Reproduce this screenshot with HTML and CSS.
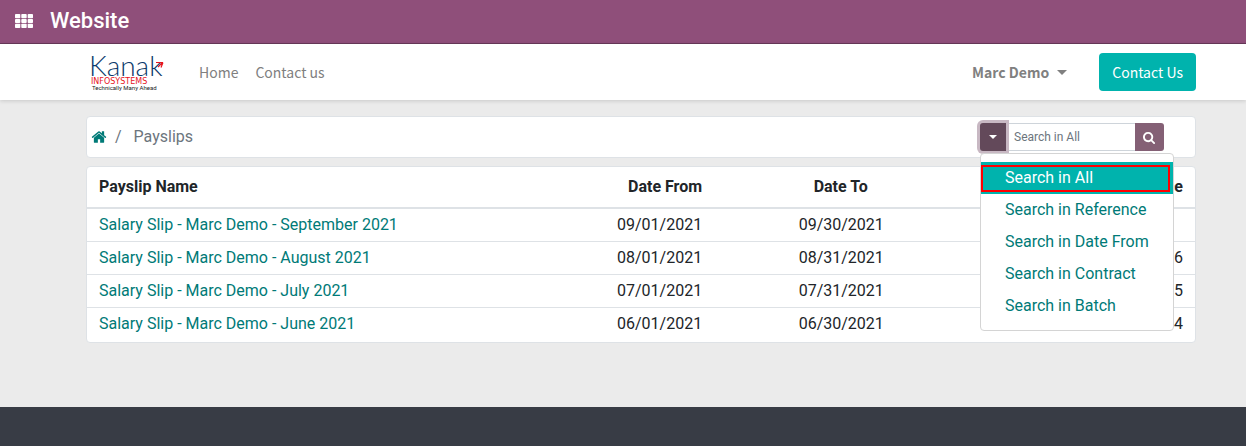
FILE: index.html
```html
<!DOCTYPE html>
<html lang="en">
<head>
<meta charset="utf-8">
<title>Payslips</title>
<link rel="stylesheet" href="styles.css">
</head>
<body>
<div class="topbar">
  <button class="apps" type="button" aria-label="Applications">
    <svg width="18" height="14" viewBox="0 0 18 14" fill="currentColor"><rect x="0" y="0" width="5.300" height="4.200" rx=".8"/><rect x="6.300" y="0" width="5.400" height="4.200" rx=".8"/><rect x="12.700" y="0" width="5.300" height="4.200" rx=".8"/><rect x="0" y="4.900" width="5.300" height="4.200" rx=".8"/><rect x="6.300" y="4.900" width="5.400" height="4.200" rx=".8"/><rect x="12.700" y="4.900" width="5.300" height="4.200" rx=".8"/><rect x="0" y="9.800" width="5.300" height="4.200" rx=".8"/><rect x="6.300" y="9.800" width="5.400" height="4.200" rx=".8"/><rect x="12.700" y="9.800" width="5.300" height="4.200" rx=".8"/></svg>
  </button>
  <a class="brand" href="#">Website</a>
</div>
<header class="header">
  <a class="logo" href="#" aria-label="Kanak Infosystems">
    <svg width="80" height="44" viewBox="0 0 80 44">
      <text class="logo-name" x="0" y="26">Kanak</text>
      <path d="M67 12.500h7M74 12.500l-2 5M73 13l-4 4" fill="none" stroke="#e8141c" stroke-width="1.200"/>
      <text class="logo-sub" x="2" y="34">INFOSYSTEMS</text>
      <text class="logo-tag" x="3" y="40">Technically Many Ahead</text>
    </svg>
  </a>
  <nav class="nav">
    <a href="#">Home</a>
    <a href="#">Contact us</a>
  </nav>
  <button class="user" type="button">Marc Demo <span class="caret caret-user"></span></button>
  <a class="cta" href="#">Contact Us</a>
</header>
<main class="main">
  <div class="card toolbar">
    <nav class="crumbs" aria-label="Breadcrumb">
      <a href="#" aria-label="Home"><svg width="16" height="16" viewBox="0 0 1792 1792" fill="currentColor"><path d="M1472 992v480q0 26-19 45t-45 19h-384v-384h-256v384h-384q-26 0-45-19t-19-45v-480q0-1 .5-3t.5-3l575-474 575 474q1 2 1 6zm223-69l-62 74q-8 9-21 11h-3q-13 0-21-7l-692-577-692 577q-12 8-24 7-13-2-21-11l-62-74q-8-10-7-23.5t11-21.5l719-599q32-26 76-26t76 26l244 204v-195q0-14 9-23t23-9h192q14 0 23 9t9 23v408l219 182q10 8 11 21.5t-7 23.5z"/></svg></a>
      <span>/</span>
      <span class="current">Payslips</span>
    </nav>
    <form class="search">
      <button class="toggle" type="button" aria-label="Search options" aria-expanded="true"><span class="caret"></span></button>
      <input class="field" type="text" placeholder="Search in All" aria-label="Search">
      <button class="go" type="button" aria-label="Search"><svg width="13" height="13" viewBox="0 0 1792 1792" fill="currentColor"><path d="M1152 832q0-185-131.5-316.5t-316.5-131.5-316.5 131.5-131.5 316.5 131.5 316.5 316.5 131.5 316.5-131.5 131.5-316.5zm512 832q0 52-38 90t-90 38q-54 0-90-38l-343-342q-179 124-399 124-143 0-273.5-55.5t-225-150-150-225-55.5-273.5 55.5-273.5 150-225 225-150 273.5-55.5 273.5 55.5 225 150 150 225 55.5 273.5q0 220-124 399l343 343q37 37 37 90z"/></svg></button>
      <div class="menu">
        <a class="active" href="#">Search in All</a>
        <a href="#">Search in Reference</a>
        <a href="#">Search in Date From</a>
        <a href="#">Search in Contract</a>
        <a href="#">Search in Batch</a>
      </div>
    </form>
  </div>
  <div class="card">
    <table class="slips">
      <colgroup><col class="c-name"><col class="c-from"><col class="c-to"><col></colgroup>
      <thead>
        <tr><th>Payslip Name</th><th>Date From</th><th class="h-to">Date To</th><th>Reference</th></tr>
      </thead>
      <tbody>
        <tr><td><a href="#">Salary Slip - Marc Demo - September 2021</a></td><td>09/01/2021</td><td>09/30/2021</td><td></td></tr>
        <tr><td><a href="#">Salary Slip - Marc Demo - August 2021</a></td><td>08/01/2021</td><td>08/31/2021</td><td>006</td></tr>
        <tr><td><a href="#">Salary Slip - Marc Demo - July 2021</a></td><td>07/01/2021</td><td>07/31/2021</td><td>005</td></tr>
        <tr><td><a href="#">Salary Slip - Marc Demo - June 2021</a></td><td>06/01/2021</td><td>06/30/2021</td><td>004</td></tr>
      </tbody>
    </table>
  </div>
</main>
<footer class="footer"></footer>
</body>
</html>
```
FILE: styles.css
```css
* { box-sizing: border-box; }
body {
  margin: 0;
  min-height: 100vh;
  display: flex;
  flex-direction: column;
  background: #ebebeb;
  color: #212529;
  font: 16px/24px Roboto, sans-serif;
}
a { color: #007a77; text-decoration: none; }
button { border: 0; margin: 0; padding: 0; font: inherit; cursor: pointer; }
svg { display: block; }

.topbar {
  display: flex;
  align-items: center;
  gap: 17px;
  padding: 0 15px 2px;
  height: 44px;
  background: #8f4f7a;
  border-bottom: 1px solid #68395a;
}
.apps { background: none; color: #fff; }
.brand { color: #fff; font-size: 22px; font-weight: 500; }

.header {
  display: flex;
  align-items: center;
  height: 56px;
  padding: 0 50px 0 86px;
  background: #fff;
  box-shadow: 0 1px 4px rgba(0, 0, 0, .15);
  font-family: "Noto Sans CJK SC", sans-serif;
  font-size: 14px;
}
.logo { margin-left: 3px; }
.logo svg { overflow: visible; }
.logo-name { font: 300 28px Lato, sans-serif; fill: #0b3a6b; }
.logo-sub { font: 8px "DejaVu Sans", sans-serif; fill: #e8141c; }
.logo-tag { font: 6px Roboto, sans-serif; fill: #222; }
.nav { display: flex; flex: 1; gap: 17px; margin-left: 30px; }
.nav a { color: #808080; }
.user {
  display: flex;
  align-items: center;
  gap: 8px;
  margin-right: 32px;
  background: none;
  color: #808080;
  font-weight: bold;
}
.caret {
  display: block;
  border: 4px solid transparent;
  border-top-color: currentColor;
  border-bottom: 0;
}
.caret-user { border-width: 5px 5px 0; }
.cta {
  padding: 7px 13px;
  border-radius: 4px;
  background: #00b3ad;
  color: #fff;
}

.main { flex: 1; padding: 16px 50px 64px 86px; }
.card {
  background: #fff;
  border: 1px solid #dee2e6;
  border-radius: 4px;
}
.toolbar {
  display: flex;
  align-items: center;
  justify-content: space-between;
  margin-bottom: 8px;
  padding: 6px 31px 6px 4px;
}
.crumbs { display: flex; align-items: center; gap: 8px; color: #6c757d; }
.current { margin-left: 4px; }
.search { position: relative; display: flex; width: 184px; height: 28px; }
.toggle, .go { display: flex; align-items: center; justify-content: center; color: #fff; }
.toggle {
  width: 26px;
  border-radius: 3px 0 0 3px;
  background: #63495a;
  box-shadow: 0 0 0 3px #c8b8c3;
  z-index: 1;
}
.field {
  flex: 1;
  min-width: 0;
  padding: 4px 8px;
  border: 1px solid #ced4da;
  border-width: 1px 0;
  font: 12px/18px Roboto, sans-serif;
}
.field::placeholder { color: #6c757d; opacity: 1; }
.go { width: 29px; border-radius: 0 3px 3px 0; background: #846075; }
.menu {
  position: absolute;
  top: 30px;
  left: 0;
  z-index: 2;
  padding: 8px 0;
  background: #fff;
  border: 1px solid #d4d4d4;
  border-radius: 4px;
}
.menu a { display: block; padding: 4px 24px; white-space: nowrap; }
.menu .active { position: relative; background: #00b3ad; color: #fff; }
.menu .active::after {
  content: "";
  position: absolute;
  inset: 3px 3px 2px 0;
  border: 2px solid #f00;
}

.slips { width: 100%; margin-bottom: 2px; border-spacing: 0; table-layout: fixed; }
.c-name { width: 39.6%; }
.c-from { width: 17%; }
.c-to { width: 16.4%; }
.slips th { padding: 8px 12px; border-bottom: 2px solid #dee2e6; text-align: right; }
.slips td { height: 33px; padding: 4px 12px; border-bottom: 1px solid #dee2e6; text-align: right; }
.slips th:first-child, .slips td:first-child { text-align: left; }
.slips .h-to { padding-right: 28px; }
.slips tr:last-child td { height: 32px; border-bottom: 0; }

.footer { padding: 20px 0 19px; background: #383c45; }
```
